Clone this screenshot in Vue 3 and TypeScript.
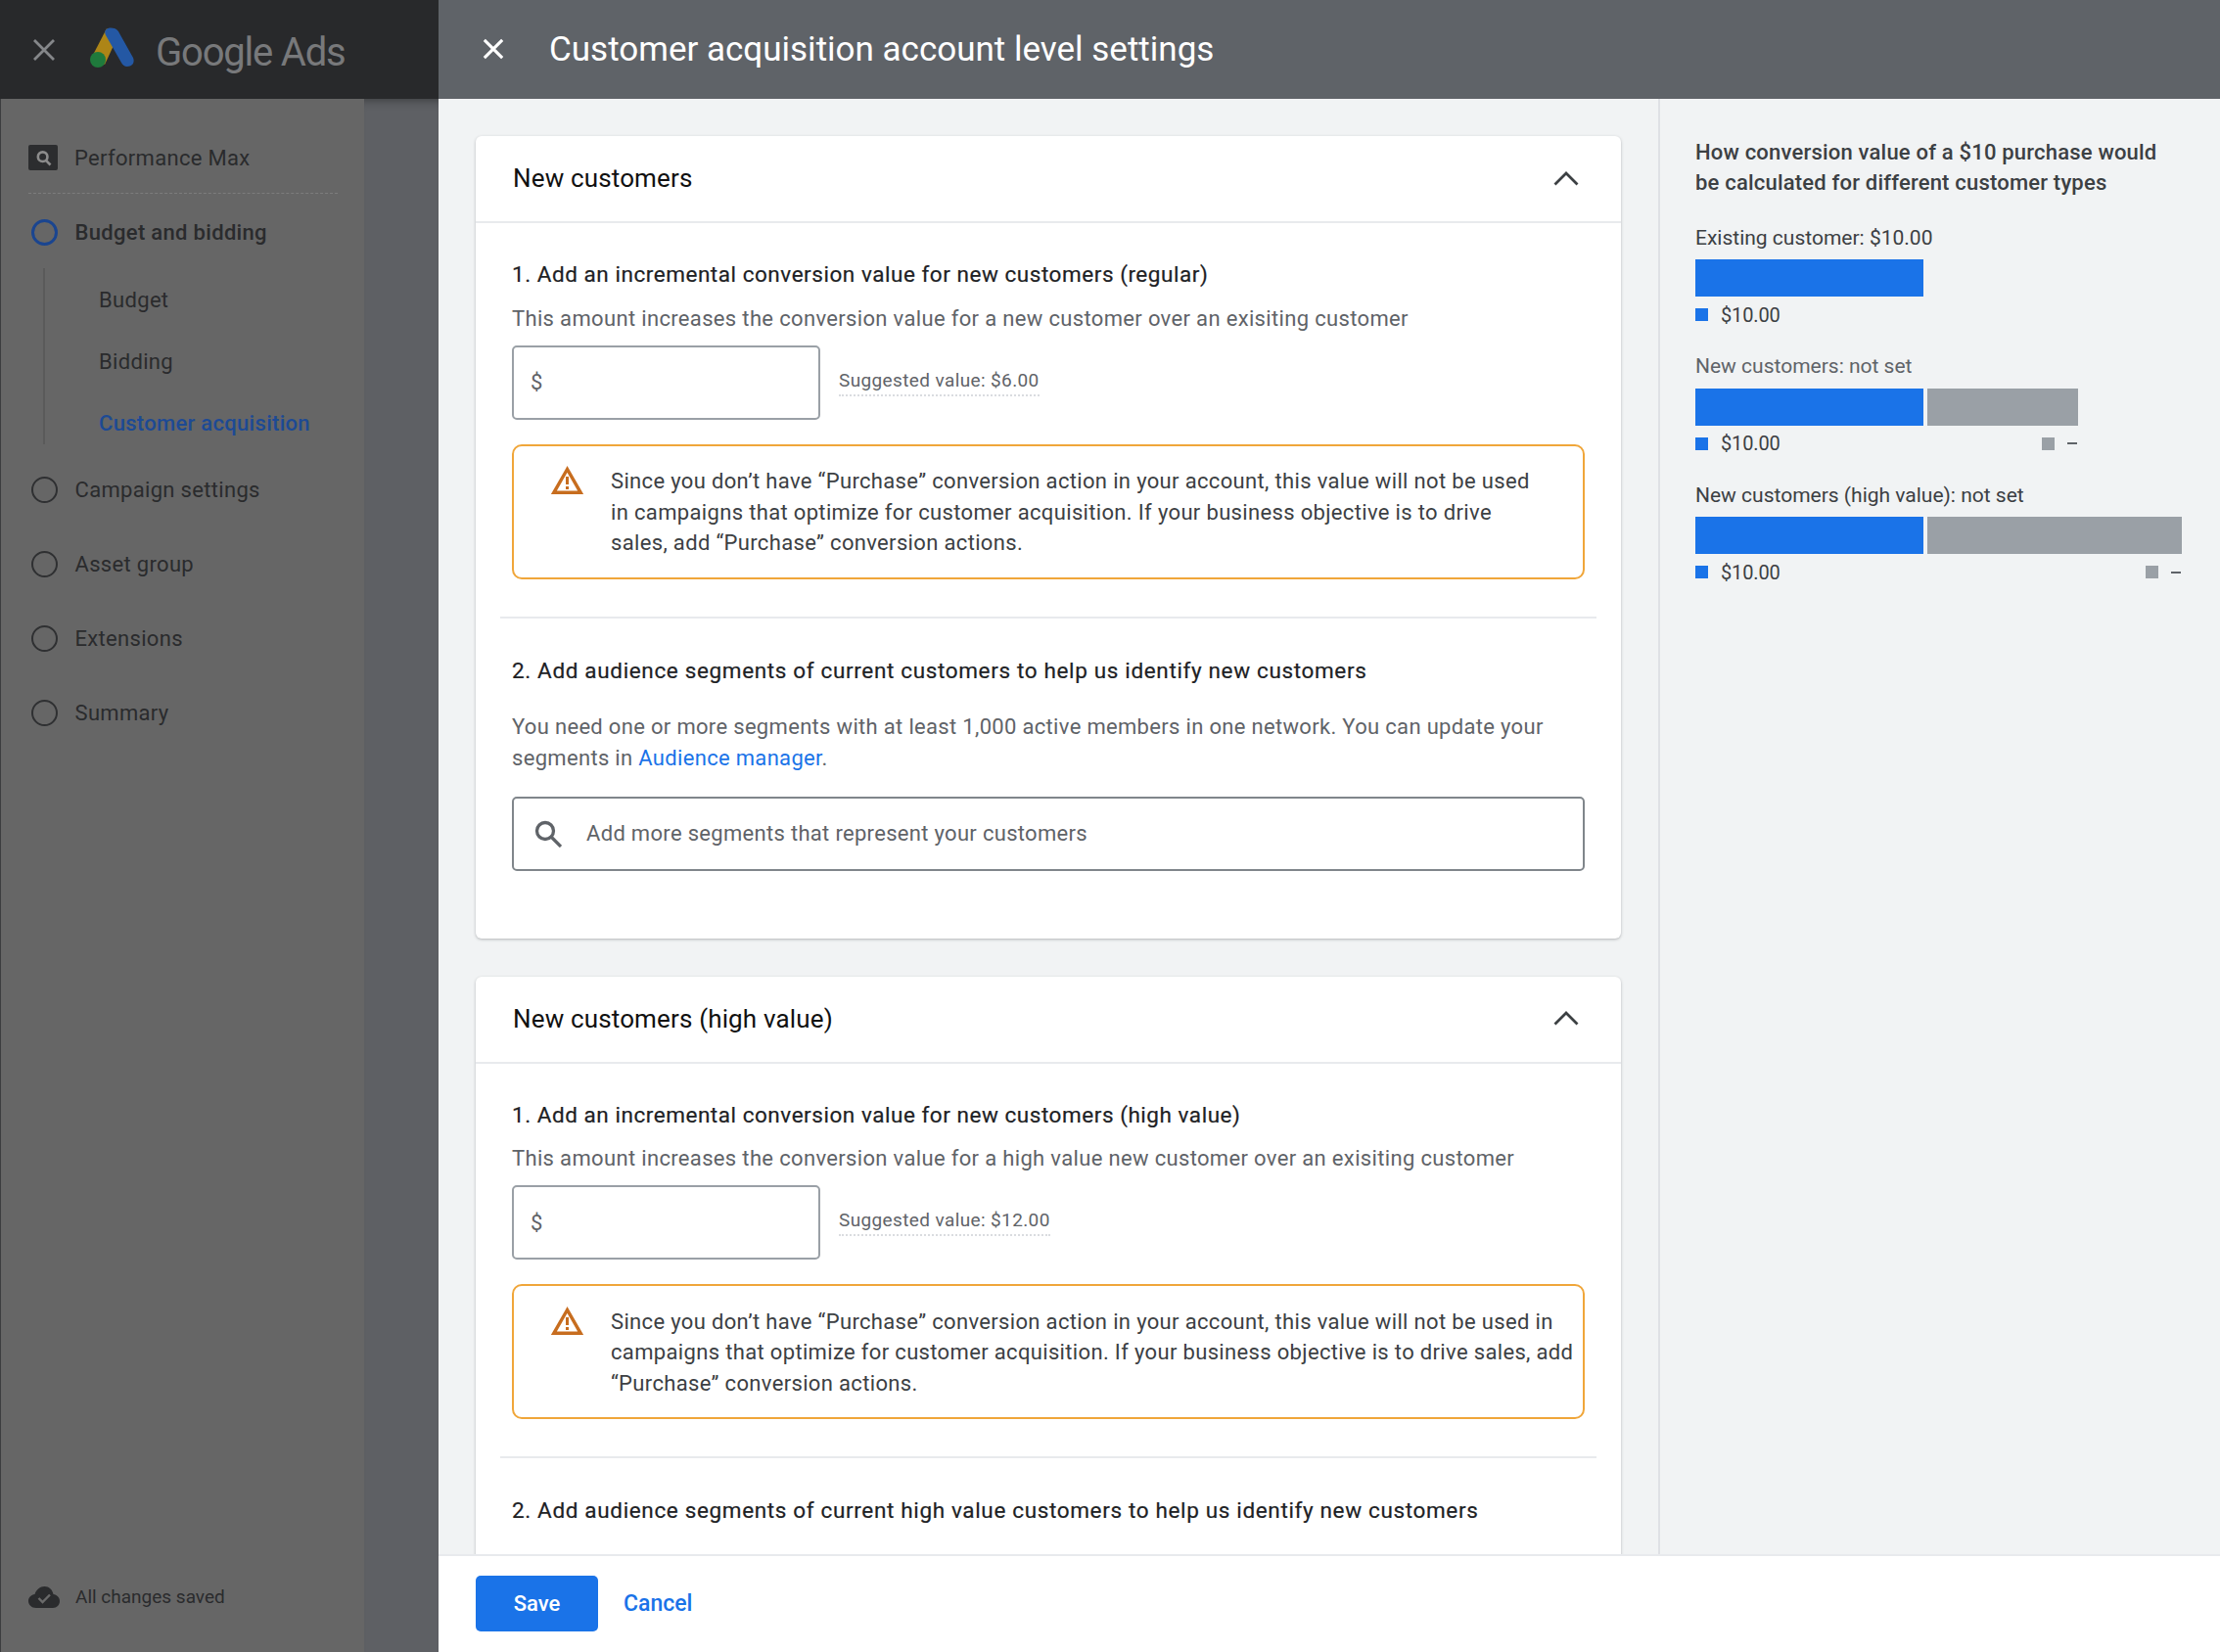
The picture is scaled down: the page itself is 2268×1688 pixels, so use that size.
<script setup lang="ts">
interface Legend {
  label: string
  total: number
  dim?: boolean
  extra: number
}

const substeps = ['Budget', 'Bidding', 'Customer acquisition']
const steps = ['Campaign settings', 'Asset group', 'Extensions', 'Summary']

const warnOne = [
  'Since you don’t have “Purchase” conversion action in your account, this value will not be used',
  'in campaigns that optimize for customer acquisition. If your business objective is to drive',
  'sales, add “Purchase” conversion actions.',
]
const warnTwo = [
  'Since you don’t have “Purchase” conversion action in your account, this value will not be used in',
  'campaigns that optimize for customer acquisition. If your business objective is to drive sales, add',
  '“Purchase” conversion actions.',
]

const charts: Legend[] = [
  { label: 'Existing customer: $10.00', total: 233, extra: 0 },
  { label: 'New customers: not set', total: 233, extra: 154, dim: true },
  { label: 'New customers (high value): not set', total: 233, extra: 260 },
]
</script>

<template>
  <div class="page">
    <div class="left">
      <div class="brand">
        <svg class="brand__close" viewBox="0 0 24 24"><path d="M2 2 22 22M22 2 2 22" /></svg>
        <svg class="brand__logo" viewBox="0 0 46 41">
          <path d="M18 1 3 30 16 38 28 12Z" fill="#ad8517" />
          <path d="M17 8C14 2 20-1 26 1 29 2 30 4 31 6L45 31C47 36 44 40 39 40 36 40 34 38 33 36Z" fill="#2458a4" />
          <circle cx="9" cy="33" r="8" fill="#1f7a3c" />
        </svg>
        <span class="brand__name">Google Ads</span>
      </div>
      <div class="left__body">
        <nav class="nav">
          <div class="nav__product">
            <span class="nav__product-icon">
              <svg viewBox="0 0 24 24"><circle cx="11" cy="10.500" r="5.500" /><path d="M15 15 20 20" /></svg>
            </span>
            Performance Max
          </div>
          <div class="nav__step nav__step--active">
            <span class="nav__dot"></span>
            Budget and bidding
          </div>
          <div class="nav__subs">
            <div
              v-for="s in substeps"
              :key="s"
              class="nav__sub"
              :class="{ 'nav__sub--active': s === 'Customer acquisition' }"
            >
              {{ s }}
            </div>
          </div>
          <div v-for="s in steps" :key="s" class="nav__step">
            <span class="nav__dot"></span>
            {{ s }}
          </div>
          <div class="nav__saved">
            <svg viewBox="0 0 32 22">
              <path d="M8 22C3 22 0 18.500 0 15 0 11 3 8.500 6.500 8 8 3.500 12 0 16.500 0 21 0 24.500 3 25.500 8 29 8.500 32 11 32 15 32 19 29 22 25 22Z" fill="#2a2b2d" />
              <path d="M10.500 12 14.500 16 22 8.500" fill="none" stroke="#6a6a6a" stroke-width="2.400" />
            </svg>
            All changes saved
          </div>
        </nav>
        <div class="left__gutter"></div>
      </div>
    </div>

    <div class="panel">
      <header class="panel__head">
        <svg class="panel__close" viewBox="0 0 24 24"><path d="M2 2 22 22M22 2 2 22" /></svg>
        <h1 class="panel__title">Customer acquisition account level settings</h1>
      </header>

      <div class="panel__middle">
        <main class="content">
          <section class="card">
            <div class="card__head">
              <h2>New customers</h2>
              <svg class="chevron" viewBox="0 0 26 16"><path d="M1.500 14.500 13 3 24.500 14.500" /></svg>
            </div>
            <div class="block">
              <h3 class="block__title block__title--tight">1. Add an incremental conversion value for new customers (regular)</h3>
              <p class="block__desc">This amount increases the conversion value for a new customer over an exisiting customer</p>
              <div class="value-row">
                <div class="field">$</div>
                <span class="suggest">Suggested value: $6.00</span>
              </div>
              <div class="warn">
                <svg class="warn__icon" viewBox="0 0 33 29">
                  <path d="M16.500 3.500 2.800 27.300H30.200Z" fill="none" stroke="#c76d1f" stroke-width="3.400" />
                  <path d="M15 11h3v8h-3zM15 21h3v3h-3z" fill="#c76d1f" />
                </svg>
                <div class="warn__text">
                  <div v-for="l in warnOne" :key="l">{{ l }}</div>
                </div>
              </div>
            </div>
            <div class="card__rule"></div>
            <div class="block block--second">
              <h3 class="block__title">2. Add audience segments of current customers to help us identify new customers</h3>
              <p class="block__para">
                You need one or more segments with at least 1,000 active members in one network. You can update your<br />
                segments in <a class="link">Audience manager</a>.
              </p>
              <div class="search">
                <svg viewBox="0 0 28 28"><circle cx="11" cy="11" r="8.500" /><path d="M17 17 27 27" /></svg>
                <span>Add more segments that represent your customers</span>
              </div>
            </div>
          </section>

          <section class="card">
            <div class="card__head">
              <h2>New customers (high value)</h2>
              <svg class="chevron" viewBox="0 0 26 16"><path d="M1.500 14.500 13 3 24.500 14.500" /></svg>
            </div>
            <div class="block">
              <h3 class="block__title block__title--tight">1. Add an incremental conversion value for new customers (high value)</h3>
              <p class="block__desc">This amount increases the conversion value for a high value new customer over an exisiting customer</p>
              <div class="value-row">
                <div class="field">$</div>
                <span class="suggest">Suggested value: $12.00</span>
              </div>
              <div class="warn">
                <svg class="warn__icon" viewBox="0 0 33 29">
                  <path d="M16.500 3.500 2.800 27.300H30.200Z" fill="none" stroke="#c76d1f" stroke-width="3.400" />
                  <path d="M15 11h3v8h-3zM15 21h3v3h-3z" fill="#c76d1f" />
                </svg>
                <div class="warn__text">
                  <div v-for="l in warnTwo" :key="l">{{ l }}</div>
                </div>
              </div>
            </div>
            <div class="card__rule"></div>
            <div class="block block--second">
              <h3 class="block__title">2. Add audience segments of current high value customers to help us identify new customers</h3>
            </div>
          </section>
        </main>

        <aside class="aside">
          <h4 class="aside__title">How conversion value of a $10 purchase would<br />be calculated for different customer types</h4>
          <div v-for="c in charts" :key="c.label" class="chart">
            <div class="chart__label" :class="{ 'chart__label--dim': c.dim }">{{ c.label }}</div>
            <div class="chart__bars">
              <span class="bar bar--blue" :style="{ width: c.total + 'px' }"></span>
              <span v-if="c.extra" class="bar bar--grey" :style="{ width: c.extra + 'px' }"></span>
            </div>
            <div class="chart__legend" :style="{ width: c.total + (c.extra ? c.extra + 4 : 0) + 'px' }">
              <span class="swatch swatch--blue"></span>
              <span class="chart__amount">$10.00</span>
              <template v-if="c.extra">
                <span class="swatch swatch--grey"></span>
                <span class="chart__dash"></span>
              </template>
            </div>
          </div>
        </aside>
      </div>

      <footer class="panel__foot">
        <button class="btn-save">Save</button>
        <a class="btn-cancel">Cancel</a>
      </footer>
    </div>
  </div>
</template>

<style>
html,
body {
  margin: 0;
  background: #f1f3f4;
}
</style>

<style scoped>
.page {
  display: flex;
  width: 2268px;
  height: 1688px;
  overflow: hidden;
  font-family: Roboto, "Liberation Sans", sans-serif;
  color: #202124;
}

.left {
  width: 448px;
  flex: none;
  display: flex;
  flex-direction: column;
}

.brand {
  height: 101px;
  flex: none;
  box-sizing: border-box;
  background: #28292b;
  display: flex;
  align-items: center;
  padding-left: 33px;
}

.brand__close {
  width: 24px;
  height: 24px;
  fill: none;
  stroke: #85878a;
  stroke-width: 2.800;
}

.brand__logo {
  width: 46px;
  height: 41px;
  margin-left: 34px;
  margin-top: -4px;
}

.brand__name {
  margin-left: 22px;
  margin-top: 6px;
  font-size: 40px;
  letter-spacing: -1.2px;
  color: #78797b;
}

.left__body {
  flex: 1;
  display: flex;
  min-height: 0;
}

.nav {
  width: 372px;
  flex: none;
  box-sizing: border-box;
  background: #666666;
  border-left: 1px solid #3c3d3f;
  padding: 46px 0 0 28px;
  display: flex;
  flex-direction: column;
  color: #2a2b2d;
  font-size: 22px;
  letter-spacing: 0.32px;
}

.left__gutter {
  flex: 1;
  background: #5e6064;
  box-shadow: inset 0 10px 10px -8px rgba(0, 0, 0, 0.35);
}

.nav__product {
  display: flex;
  align-items: center;
  gap: 17px;
  height: 28px;
  width: 316px;
  padding-bottom: 22px;
  border-bottom: 1px dashed #7d7d7d;
}

.nav__product-icon {
  width: 30px;
  height: 26px;
  background: #2c2d2f;
  border-radius: 2px;
  display: flex;
  align-items: center;
  justify-content: center;
}

.nav__product-icon svg {
  width: 21px;
  height: 21px;
  fill: none;
  stroke: #8c8c8c;
  stroke-width: 3;
}

.nav__step {
  display: flex;
  align-items: center;
  gap: 17.500px;
  height: 76px;
}

.nav__step--active {
  font-weight: 500;
  height: 78px;
}

.nav__dot {
  width: 27px;
  height: 27px;
  box-sizing: border-box;
  border: 2.500px solid #2f3032;
  border-radius: 50%;
  flex: none;
  margin-left: 3px;
}

.nav__step--active .nav__dot {
  border: 3px solid #1a4590;
}

.nav__subs {
  margin-left: 15px;
  border-left: 2px solid #5a5a5a;
  padding-top: 2px;
  margin-top: -2px;
  height: 180px;
  box-sizing: border-box;
  margin-bottom: 8px;
}

.nav__sub {
  height: 63px;
  display: flex;
  align-items: center;
  padding-left: 55px;
}

.nav__sub:first-child {
  margin-top: -1px;
}

.nav__sub--active {
  color: #1d4a94;
  font-weight: 500;
  letter-spacing: 0.3px;
}

.nav__saved {
  margin-top: auto;
  margin-bottom: 45px;
  display: flex;
  align-items: center;
  gap: 16px;
  font-size: 19px;
  letter-spacing: 0;
}

.nav__saved svg {
  width: 32px;
  height: 22px;
}

.panel {
  flex: 1;
  min-width: 0;
  display: flex;
  flex-direction: column;
}

.panel__head {
  height: 101px;
  flex: none;
  box-sizing: border-box;
  background: #5f6368;
  display: flex;
  align-items: center;
  padding: 0 0 1px 45px;
}

.panel__close {
  width: 22px;
  height: 22px;
  fill: none;
  stroke: #fff;
  stroke-width: 3.300;
}

.panel__title {
  margin: 0 0 0 46px;
  font-size: 35px;
  font-weight: 400;
  color: #fff;
  letter-spacing: 0;
}

.panel__middle {
  flex: 1;
  min-height: 0;
  display: flex;
  background: #f1f3f4;
}

.content {
  width: 1248px;
  flex: none;
  box-sizing: border-box;
  padding: 38px 38px 0;
  overflow: hidden;
  border-right: 2px solid #dfe1e5;
}

.card {
  width: 1170px;
  background: #fff;
  border-radius: 6px;
  box-shadow: 0 1px 3px rgba(60, 64, 67, 0.35);
  margin-bottom: 39px;
}

.card__head {
  height: 87px;
  border-bottom: 2px solid #e8eaed;
  display: flex;
  align-items: center;
  justify-content: space-between;
  padding: 0 43px 0 38px;
}

.card__head h2 {
  margin: 0 0 1px;
  font-size: 26px;
  font-weight: 400;
  color: #111;
  letter-spacing: 0.15px;
}

.chevron {
  width: 26px;
  height: 16px;
  margin-bottom: 2px;
  fill: none;
  stroke: #3c4043;
  stroke-width: 2.800;
}

.block {
  padding: 37px 37px 0 37px;
}

.block--second {
  padding-top: 38px;
  padding-bottom: 69px;
}

.block__title {
  margin: 0;
  font-size: 22.500px;
  line-height: 31px;
  font-weight: 400;
  letter-spacing: 0.65px;
  color: #202124;
  -webkit-text-stroke: 0.2px #202124;
}

.block__title--tight {
  letter-spacing: 0.54px;
}

.block__desc {
  margin: 13.500px 0 0;
  font-size: 22px;
  line-height: 31px;
  letter-spacing: 0.34px;
  color: #5f6368;
}

.value-row {
  display: flex;
  align-items: center;
  margin-top: 12px;
}

.field {
  width: 315px;
  height: 76px;
  box-sizing: border-box;
  border: 2px solid #9aa0a6;
  border-radius: 5px;
  display: flex;
  align-items: center;
  padding-left: 17px;
  font-size: 22px;
  color: #5f6368;
}

.suggest {
  margin-left: 19px;
  margin-top: -1px;
  padding-bottom: 2px;
  border-bottom: 2px dotted #dadce0;
  font-size: 19px;
  line-height: 25px;
  letter-spacing: 0.38px;
  color: #5f6368;
}

.warn {
  margin-top: 25px;
  height: 138px;
  box-sizing: border-box;
  border: 2px solid #f0a63a;
  border-radius: 10px;
  display: flex;
  padding-top: 20.500px;
  padding-left: 38px;
}

.warn__icon {
  width: 33px;
  height: 29px;
  flex: none;
}

.warn__text {
  margin-left: 28px;
  font-size: 22px;
  line-height: 31.500px;
  letter-spacing: 0.34px;
  color: #3c4043;
  white-space: nowrap;
}

.card__rule {
  margin: 38px 25px 0 25px;
  height: 2px;
  background: #e8eaed;
  width: 1120px;
}

.block__para {
  margin: 26px 0 0;
  font-size: 22px;
  line-height: 32px;
  letter-spacing: 0.32px;
  color: #5f6368;
  white-space: nowrap;
}

.link {
  color: #1a73e8;
}

.search {
  margin-top: 23px;
  height: 76px;
  box-sizing: border-box;
  border: 2px solid #80868b;
  border-radius: 5px;
  display: flex;
  align-items: center;
  padding-left: 21px;
  gap: 25px;
  font-size: 22px;
  letter-spacing: 0.31px;
  color: #5f6368;
}

.search svg {
  width: 28px;
  height: 28px;
  fill: none;
  stroke: #5f6368;
  stroke-width: 3.300;
}

.aside {
  flex: 1;
  box-sizing: border-box;
  padding: 39px 0 0 36px;
}

.aside__title {
  margin: 0 0 25.500px;
  font-size: 22px;
  line-height: 31px;
  font-weight: 500;
  letter-spacing: 0.2px;
  color: #3c4043;
}

.chart {
  margin-bottom: 22.500px;
}

.chart__label {
  font-size: 21px;
  line-height: 30px;
  letter-spacing: 0;
  color: #3c4043;
}

.chart__label--dim {
  color: #5f6368;
}

.chart__bars {
  display: flex;
  gap: 4px;
  margin-top: 7.500px;
  height: 38px;
}

.bar {
  display: block;
  height: 38px;
}

.bar--blue,
.swatch--blue {
  background: #1a73e8;
}

.bar--grey,
.swatch--grey {
  background: #9aa0a6;
}

.chart__legend {
  display: flex;
  align-items: center;
  margin-top: 3.500px;
  height: 30px;
}

.swatch {
  width: 13px;
  height: 13px;
  flex: none;
}

.chart__amount {
  margin-left: 13px;
  font-size: 20px;
  letter-spacing: -0.15px;
  color: #3c4043;
  flex: 1;
}

.chart__dash {
  width: 10px;
  height: 2px;
  margin-left: 13px;
  margin-right: 1px;
  background: #5f6368;
}

.panel__foot {
  height: 100px;
  flex: none;
  box-sizing: border-box;
  background: #fff;
  border-top: 2px solid #e8eaed;
  display: flex;
  align-items: center;
  padding: 0 0 2px 38px;
}

.btn-save {
  width: 125px;
  height: 57px;
  border: 0;
  border-radius: 5px;
  background: #1a73e8;
  color: #fff;
  font-family: inherit;
  font-size: 22px;
  font-weight: 500;
}

.btn-cancel {
  margin-left: 26px;
  color: #1a73e8;
  font-size: 23px;
  font-weight: 500;
}
</style>
